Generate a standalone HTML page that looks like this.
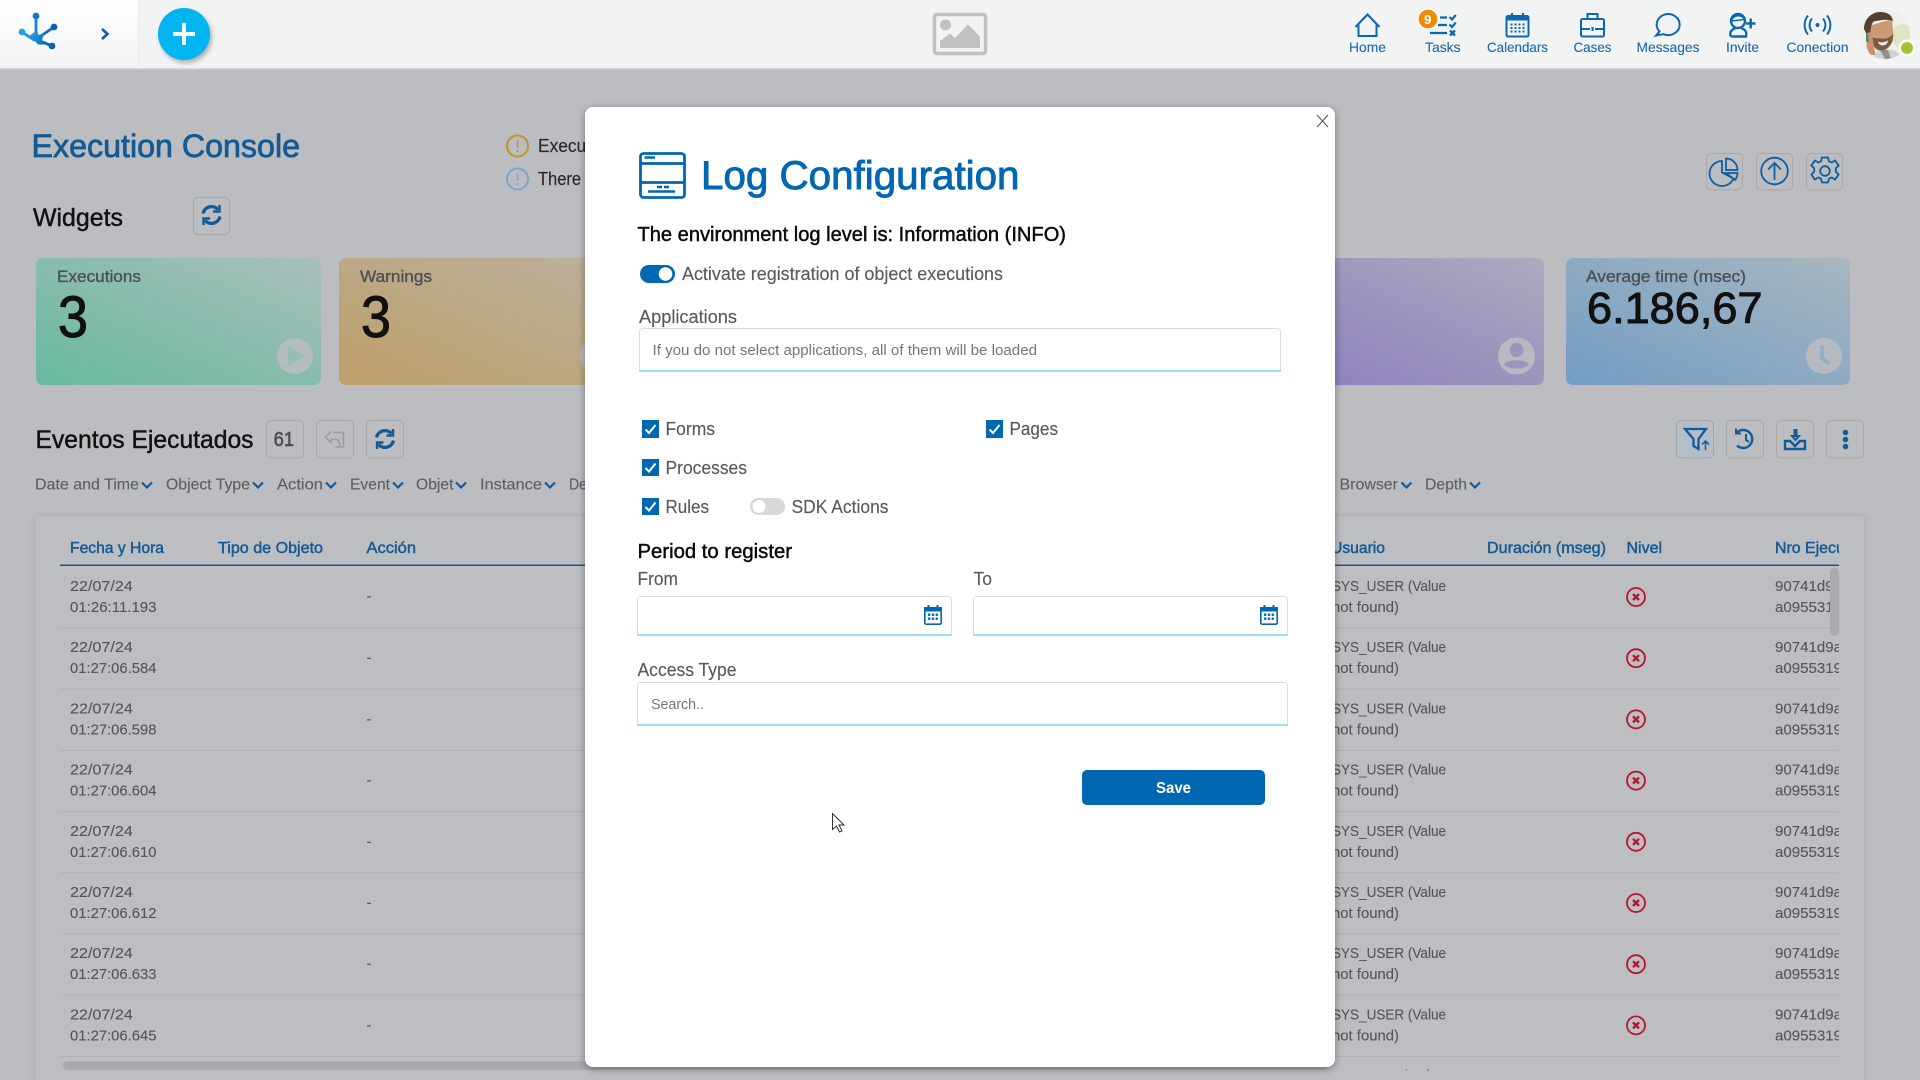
<!DOCTYPE html>
<html lang="en"><head><meta charset="utf-8"><title>Log Configuration</title>
<style>
html,body{margin:0;padding:0;width:1920px;height:1080px;overflow:hidden;background:#bcbdc1}
svg{position:absolute;left:0;top:0;display:block}
text{font-family:"Liberation Sans",Arial,sans-serif;fill:currentColor;white-space:pre}
.m{stroke:currentColor;stroke-width:.4}
.b{fill:none;stroke:#a8a9ad;stroke-width:1}
.lab{font-size:16px;color:#5b5e63;stroke:currentColor;stroke-width:.12}
.chev{fill:none;stroke:#135a96;stroke-width:2.200}
.th{font-size:16px;color:#135a96;stroke:currentColor;stroke-width:.45}
.td{font-size:15px;color:#54565b;stroke:currentColor;stroke-width:.12}
.nav{font-size:14px;color:#1c6ab0;stroke:currentColor;stroke-width:.12}
.ni{fill:none;stroke:#0c67b1;stroke-width:2}
.ti{fill:none;stroke:#0f5f9f;stroke-width:1.800}
.tb{fill:none;stroke:#135a96;stroke-width:2.400}
.l{font-size:18px;color:#5a5a5a;stroke:currentColor;stroke-width:.15}
#modal{position:absolute;left:585px;top:107px;width:750px;height:960px;background:#fff;border-radius:8px;box-shadow:0 2px 8px rgba(0,0,0,.38)}
#modal svg{left:0;top:0}
</style></head><body>
<svg width="1920" height="1080" viewBox="0 0 1920 1080" xmlns="http://www.w3.org/2000/svg">
<defs>
<linearGradient id="c1" x1="0" y1="1" x2="1" y2="0"><stop offset="0" stop-color="#68b9a0"/><stop offset="1" stop-color="#a8bfba"/></linearGradient>
<linearGradient id="c2" x1="0" y1="1" x2="1" y2="0"><stop offset="0" stop-color="#bd9f69"/><stop offset="1" stop-color="#bcb19e"/></linearGradient>
<linearGradient id="c4" x1="0" y1="1" x2="1" y2="0"><stop offset="0" stop-color="#8b7dbd"/><stop offset="1" stop-color="#aeaabf"/></linearGradient>
<linearGradient id="c5" x1="0" y1="1" x2="1" y2="0"><stop offset="0" stop-color="#739ec4"/><stop offset="1" stop-color="#a8b6c0"/></linearGradient>
<linearGradient id="hl" x1="0" y1="0" x2="0" y2="1"><stop offset="0" stop-color="#ffffff"/><stop offset="1" stop-color="#f3f5f5"/></linearGradient>
<linearGradient id="logo" x1="0" y1="0" x2="1" y2="1"><stop offset="0" stop-color="#2fa3e0"/><stop offset="1" stop-color="#0a69b8"/></linearGradient>
<clipPath id="tbl"><rect x="0" y="500" width="1839" height="580"/></clipPath>
<clipPath id="av"><circle cx="1885" cy="34" r="25"/></clipPath>
<symbol id="err" viewBox="0 0 24 24" overflow="visible"><circle cx="12" cy="12" r="9" fill="none" stroke="#b3162e" stroke-width="1.800"/><path d="M9 9l6 6M15 9l-6 6" fill="none" stroke="#b3162e" stroke-width="2.400"/></symbol>
</defs>

<!-- Page head -->
<text x="31.500" y="157" font-size="32" class="m" style="color:#135a96;stroke-width:.75" textLength="268.500" lengthAdjust="spacingAndGlyphs">Execution Console</text>
<circle cx="517.500" cy="146" r="10.500" fill="none" stroke="#c1942b" stroke-width="2"/><path d="M517.500 140v7.500M517.500 150v2" stroke="#c1942b" stroke-width="1.600" fill="none"/>
<circle cx="517.500" cy="179" r="10.500" fill="none" stroke="#7aa6c8" stroke-width="2"/><path d="M517.500 173v7.500M517.500 183v2" stroke="#7aa6c8" stroke-width="1.600" fill="none"/>
<text x="538" y="152" font-size="18" class="m" style="color:#26282c;stroke-width:.15" textLength="53" lengthAdjust="spacingAndGlyphs">Execut</text>
<text x="538" y="185" font-size="18" class="m" style="color:#26282c;stroke-width:.15" textLength="43" lengthAdjust="spacingAndGlyphs">There</text>

<text x="33" y="226" font-size="25" class="m" style="color:#111;stroke-width:.45" textLength="90" lengthAdjust="spacingAndGlyphs">Widgets</text>
<rect x="193.500" y="197.500" width="36" height="37" rx="5" class="b"/>
<g class="tb" transform="translate(211.500,215)" style="stroke-width:3.300"><path d="M-8.500-1.500A8.700 8.700 0 0 1 6.500-5.500"/><path d="M8.500 1.500A8.700 8.700 0 0 1-6.500 5.500"/><path d="M8-10V-3.500H1.500" stroke-width="2.400"/><path d="M-8 10V3.500H-1.500" stroke-width="2.400"/></g>

<!-- Widgets -->
<rect x="36" y="258" width="285" height="127" rx="7" fill="url(#c1)"/>
<rect x="339" y="258" width="285" height="127" rx="7" fill="url(#c2)"/>
<rect x="1263" y="258" width="281" height="127" rx="7" fill="url(#c4)"/>
<rect x="1566" y="258" width="284" height="127" rx="7" fill="url(#c5)"/>
<text x="57" y="282" font-size="17" class="m" style="color:#4c5055;stroke-width:.35" textLength="84" lengthAdjust="spacingAndGlyphs">Executions</text>
<text x="58" y="337" font-size="58" class="m" style="color:#111;stroke-width:1" textLength="30" lengthAdjust="spacingAndGlyphs">3</text>
<circle cx="295" cy="356" r="18" fill="#bcbdc1" opacity=".85"/><path d="M288 346l17 10-17 10z" fill="#8fbdb0" opacity=".8"/>
<text x="360" y="282" font-size="17" class="m" style="color:#4c5055;stroke-width:.35" textLength="72" lengthAdjust="spacingAndGlyphs">Warnings</text>
<text x="361" y="337" font-size="58" class="m" style="color:#111;stroke-width:1" textLength="30" lengthAdjust="spacingAndGlyphs">3</text>
<circle cx="598" cy="356" r="18" fill="#bcbdc1" opacity=".85"/>
<circle cx="1516.500" cy="356" r="18.500" fill="#bcbdc1" opacity=".9"/>
<circle cx="1516.500" cy="350" r="7" fill="#9e95bd"/><path d="M1504 364c3-5 22-5 25 0-3 6-22 6-25 0z" fill="#9e95bd"/>
<text x="1586" y="282" font-size="17" class="m" style="color:#4c5055;stroke-width:.35" textLength="160" lengthAdjust="spacingAndGlyphs">Average time (msec)</text>
<text x="1587" y="323" font-size="44" class="m" style="color:#111;stroke-width:1" textLength="175.500" lengthAdjust="spacingAndGlyphs">6.186,67</text>
<circle cx="1824" cy="356" r="18" fill="#bcbdc1" opacity=".85"/><path d="M1822 345v13l7 6" fill="none" stroke="#93adc3" stroke-width="3.500"/>

<!-- Top right tools -->
<rect x="1706.500" y="153.500" width="36" height="36.500" rx="5" class="b"/>
<rect x="1756.500" y="153.500" width="36" height="36.500" rx="5" class="b"/>
<rect x="1806.500" y="153.500" width="36" height="36.500" rx="5" class="b"/>
<g class="ti"><path d="M1722 161a12.500 12.500 0 1 0 11.500 17.500l-11.500-6z"/><path d="M1726 158.500a11.500 11.500 0 0 1 11.500 11.500h-11.500z"/><path d="M1726 173h11.500a11.500 11.500 0 0 1-2.500 7z"/></g>
<g class="ti"><circle cx="1774.500" cy="171" r="13.300"/><path d="M1774.500 180v-17M1768 169.500l6.500-6.500 6.500 6.500"/></g>
<g class="ti" transform="translate(1825,171)"><circle r="4.800"/><path d="M-3-13.500h6l1 3.800 2.600 1.200 3.500-2 3.500 5-2.800 2.800v3.400l2.800 2.800-3.500 5-3.500-2-2.600 1.200-1 3.800h-6l-1-3.800-2.600-1.200-3.500 2-3.500-5 2.800-2.800v-3.400l-2.800-2.800 3.500-5 3.500 2 2.600-1.200z"/></g>

<!-- Eventos -->
<text x="35.500" y="448" font-size="25" class="m" style="color:#111;stroke-width:.45" textLength="218" lengthAdjust="spacingAndGlyphs">Eventos Ejecutados</text>
<rect x="266.500" y="420.500" width="37" height="37.500" rx="5" class="b"/>
<text x="273.600" y="446" font-size="20" class="m" style="color:#4b4e53;stroke-width:.6" textLength="20.500" lengthAdjust="spacingAndGlyphs">61</text>
<rect x="316.500" y="420.500" width="37" height="37.500" rx="5" class="b"/>
<path d="M331 431.500L325.500 437L331 442.500V439.500H336C339 439.500 340 442 340 447M333.500 432.500H343.500V447H335.500" fill="none" stroke="#9a9b9f" stroke-width="1.500"/>
<rect x="366.500" y="420.500" width="37" height="37.500" rx="5" class="b"/>
<g class="tb" transform="translate(385,439)" style="stroke-width:3.300"><path d="M-8.500-1.500A8.700 8.700 0 0 1 6.500-5.500"/><path d="M8.500 1.500A8.700 8.700 0 0 1-6.500 5.500"/><path d="M8-10V-3.500H1.500" stroke-width="2.400"/><path d="M-8 10V3.500H-1.500" stroke-width="2.400"/></g>

<rect x="1676.500" y="420.500" width="37" height="37.500" rx="5" fill="#b3bec8" stroke="#a2a7ad"/>
<path d="M1685 429H1706L1698.500 439V449L1693.500 446V439Z" fill="none" stroke="#135a96" stroke-width="2.300"/>
<path d="M1705.500 450V441M1702 444.500L1705.500 441L1709 444.500" fill="none" stroke="#135a96" stroke-width="1.500"/>
<rect x="1726.500" y="420.500" width="37" height="37.500" rx="5" class="b"/>
<g class="tb"><path d="M1737 432.500A9 9 0 1 1 1737 445.500"/><path d="M1736 428.500v5h5" stroke-width="2"/><path d="M1746 434v6l3 2" stroke-width="2"/></g>
<rect x="1776.500" y="420.500" width="37" height="37.500" rx="5" class="b"/>
<g class="tb"><path d="M1785 441v8h20v-8h-5l-5 5-5-5z"/><path d="M1792 436h2.500v-6h2v6h2.500l-3.500 4z" stroke-width="2"/></g>
<rect x="1826.500" y="420.500" width="37" height="37.500" rx="5" class="b"/>
<g fill="#135a96"><circle cx="1845.500" cy="432.500" r="2.800"/><circle cx="1845.500" cy="439.500" r="2.800"/><circle cx="1845.500" cy="446.500" r="2.800"/></g>

<!-- Filters -->
<text class="lab" x="35" y="489.500" textLength="104" lengthAdjust="spacingAndGlyphs">Date and Time</text><path class="chev" d="M142 482.500l5 5 5-5"/>
<text class="lab" x="166" y="489.500" textLength="84" lengthAdjust="spacingAndGlyphs">Object Type</text><path class="chev" d="M253 482.500l5 5 5-5"/>
<text class="lab" x="277" y="489.500" textLength="46" lengthAdjust="spacingAndGlyphs">Action</text><path class="chev" d="M326 482.500l5 5 5-5"/>
<text class="lab" x="350" y="489.500" textLength="40" lengthAdjust="spacingAndGlyphs">Event</text><path class="chev" d="M393 482.500l5 5 5-5"/>
<text class="lab" x="416" y="489.500" textLength="37.500" lengthAdjust="spacingAndGlyphs">Objet</text><path class="chev" d="M456 482.500l5 5 5-5"/>
<text class="lab" x="480" y="489.500" textLength="62" lengthAdjust="spacingAndGlyphs">Instance</text><path class="chev" d="M545 482.500l5 5 5-5"/>
<text class="lab" x="569" y="489.500" textLength="18" lengthAdjust="spacingAndGlyphs">De</text>
<text class="lab" x="1339.500" y="489.500" textLength="58.500" lengthAdjust="spacingAndGlyphs">Browser</text><path class="chev" d="M1401.500 482.500l5 5 5-5"/>
<text class="lab" x="1425" y="489.500" textLength="42" lengthAdjust="spacingAndGlyphs">Depth</text><path class="chev" d="M1470 482.500l5 5 5-5"/>

<!-- Table -->
<rect x="35" y="516" width="1829" height="570" fill="#bdbec2" style="filter:drop-shadow(0 0 3px rgba(0,0,0,.1))"/>
<g clip-path="url(#tbl)">
<text class="th" x="70" y="553" textLength="94" lengthAdjust="spacingAndGlyphs">Fecha y Hora</text>
<text class="th" x="218" y="553" textLength="105" lengthAdjust="spacingAndGlyphs">Tipo de Objeto</text>
<text class="th" x="366.500" y="553" textLength="49.500" lengthAdjust="spacingAndGlyphs">Acción</text>
<text class="th" x="1331" y="553" textLength="54" lengthAdjust="spacingAndGlyphs">Usuario</text>
<text class="th" x="1487" y="553" textLength="119" lengthAdjust="spacingAndGlyphs">Duración (mseg)</text>
<text class="th" x="1626.500" y="553" textLength="35.500" lengthAdjust="spacingAndGlyphs">Nivel</text>
<text class="th" x="1775" y="553" textLength="99" lengthAdjust="spacingAndGlyphs">Nro Ejecución</text>
<rect x="60" y="564.500" width="1779" height="1.500" fill="#16558f"/>

<g>
<text class="td" x="70" y="591" textLength="62.800" lengthAdjust="spacingAndGlyphs">22/07/24</text><text class="td" x="70" y="612" textLength="86.500" lengthAdjust="spacingAndGlyphs">01:26:11.193</text>
<text class="td" x="366.500" y="601">-</text><text class="td" x="1332" y="591" textLength="114" lengthAdjust="spacingAndGlyphs">SYS_USER (Value</text><text class="td" x="1332" y="612" textLength="67" lengthAdjust="spacingAndGlyphs">not found)</text>
<use href="#err" x="1624" y="585" width="24" height="24"/>
<text class="td" x="1775" y="591" textLength="67" lengthAdjust="spacingAndGlyphs">90741d9a</text><text class="td" x="1775" y="612" textLength="67" lengthAdjust="spacingAndGlyphs">a0955319</text>
<rect x="60" y="627.500" width="1779" height="1" fill="#b1b2b6"/>
</g>
<g transform="translate(0,61.200)">
<text class="td" x="70" y="591" textLength="62.800" lengthAdjust="spacingAndGlyphs">22/07/24</text><text class="td" x="70" y="612" textLength="86.500" lengthAdjust="spacingAndGlyphs">01:27:06.584</text>
<text class="td" x="366.500" y="601.500">-</text><text class="td" x="1332" y="591" textLength="114" lengthAdjust="spacingAndGlyphs">SYS_USER (Value</text><text class="td" x="1332" y="612" textLength="67" lengthAdjust="spacingAndGlyphs">not found)</text>
<use href="#err" x="1624" y="585" width="24" height="24"/>
<text class="td" x="1775" y="591" textLength="67" lengthAdjust="spacingAndGlyphs">90741d9a</text><text class="td" x="1775" y="612" textLength="67" lengthAdjust="spacingAndGlyphs">a0955319</text>
<rect x="60" y="627.500" width="1779" height="1" fill="#b1b2b6"/>
</g>
<g transform="translate(0,122.400)">
<text class="td" x="70" y="591" textLength="62.800" lengthAdjust="spacingAndGlyphs">22/07/24</text><text class="td" x="70" y="612" textLength="86.500" lengthAdjust="spacingAndGlyphs">01:27:06.598</text>
<text class="td" x="366.500" y="601.500">-</text><text class="td" x="1332" y="591" textLength="114" lengthAdjust="spacingAndGlyphs">SYS_USER (Value</text><text class="td" x="1332" y="612" textLength="67" lengthAdjust="spacingAndGlyphs">not found)</text>
<use href="#err" x="1624" y="585" width="24" height="24"/>
<text class="td" x="1775" y="591" textLength="67" lengthAdjust="spacingAndGlyphs">90741d9a</text><text class="td" x="1775" y="612" textLength="67" lengthAdjust="spacingAndGlyphs">a0955319</text>
<rect x="60" y="627.500" width="1779" height="1" fill="#b1b2b6"/>
</g>
<g transform="translate(0,183.600)">
<text class="td" x="70" y="591" textLength="62.800" lengthAdjust="spacingAndGlyphs">22/07/24</text><text class="td" x="70" y="612" textLength="86.500" lengthAdjust="spacingAndGlyphs">01:27:06.604</text>
<text class="td" x="366.500" y="601.500">-</text><text class="td" x="1332" y="591" textLength="114" lengthAdjust="spacingAndGlyphs">SYS_USER (Value</text><text class="td" x="1332" y="612" textLength="67" lengthAdjust="spacingAndGlyphs">not found)</text>
<use href="#err" x="1624" y="585" width="24" height="24"/>
<text class="td" x="1775" y="591" textLength="67" lengthAdjust="spacingAndGlyphs">90741d9a</text><text class="td" x="1775" y="612" textLength="67" lengthAdjust="spacingAndGlyphs">a0955319</text>
<rect x="60" y="627.500" width="1779" height="1" fill="#b1b2b6"/>
</g>
<g transform="translate(0,244.800)">
<text class="td" x="70" y="591" textLength="62.800" lengthAdjust="spacingAndGlyphs">22/07/24</text><text class="td" x="70" y="612" textLength="86.500" lengthAdjust="spacingAndGlyphs">01:27:06.610</text>
<text class="td" x="366.500" y="601.500">-</text><text class="td" x="1332" y="591" textLength="114" lengthAdjust="spacingAndGlyphs">SYS_USER (Value</text><text class="td" x="1332" y="612" textLength="67" lengthAdjust="spacingAndGlyphs">not found)</text>
<use href="#err" x="1624" y="585" width="24" height="24"/>
<text class="td" x="1775" y="591" textLength="67" lengthAdjust="spacingAndGlyphs">90741d9a</text><text class="td" x="1775" y="612" textLength="67" lengthAdjust="spacingAndGlyphs">a0955319</text>
<rect x="60" y="627.500" width="1779" height="1" fill="#b1b2b6"/>
</g>
<g transform="translate(0,306)">
<text class="td" x="70" y="591" textLength="62.800" lengthAdjust="spacingAndGlyphs">22/07/24</text><text class="td" x="70" y="612" textLength="86.500" lengthAdjust="spacingAndGlyphs">01:27:06.612</text>
<text class="td" x="366.500" y="601.500">-</text><text class="td" x="1332" y="591" textLength="114" lengthAdjust="spacingAndGlyphs">SYS_USER (Value</text><text class="td" x="1332" y="612" textLength="67" lengthAdjust="spacingAndGlyphs">not found)</text>
<use href="#err" x="1624" y="585" width="24" height="24"/>
<text class="td" x="1775" y="591" textLength="67" lengthAdjust="spacingAndGlyphs">90741d9a</text><text class="td" x="1775" y="612" textLength="67" lengthAdjust="spacingAndGlyphs">a0955319</text>
<rect x="60" y="627.500" width="1779" height="1" fill="#b1b2b6"/>
</g>
<g transform="translate(0,367.200)">
<text class="td" x="70" y="591" textLength="62.800" lengthAdjust="spacingAndGlyphs">22/07/24</text><text class="td" x="70" y="612" textLength="86.500" lengthAdjust="spacingAndGlyphs">01:27:06.633</text>
<text class="td" x="366.500" y="601.500">-</text><text class="td" x="1332" y="591" textLength="114" lengthAdjust="spacingAndGlyphs">SYS_USER (Value</text><text class="td" x="1332" y="612" textLength="67" lengthAdjust="spacingAndGlyphs">not found)</text>
<use href="#err" x="1624" y="585" width="24" height="24"/>
<text class="td" x="1775" y="591" textLength="67" lengthAdjust="spacingAndGlyphs">90741d9a</text><text class="td" x="1775" y="612" textLength="67" lengthAdjust="spacingAndGlyphs">a0955319</text>
<rect x="60" y="627.500" width="1779" height="1" fill="#b1b2b6"/>
</g>
<g transform="translate(0,428.400)">
<text class="td" x="70" y="591" textLength="62.800" lengthAdjust="spacingAndGlyphs">22/07/24</text><text class="td" x="70" y="612" textLength="86.500" lengthAdjust="spacingAndGlyphs">01:27:06.645</text>
<text class="td" x="366.500" y="601.500">-</text><text class="td" x="1332" y="591" textLength="114" lengthAdjust="spacingAndGlyphs">SYS_USER (Value</text><text class="td" x="1332" y="612" textLength="67" lengthAdjust="spacingAndGlyphs">not found)</text>
<use href="#err" x="1624" y="585" width="24" height="24"/>
<text class="td" x="1775" y="591" textLength="67" lengthAdjust="spacingAndGlyphs">90741d9a</text><text class="td" x="1775" y="612" textLength="67" lengthAdjust="spacingAndGlyphs">a0955319</text>
<rect x="60" y="627.500" width="1779" height="1" fill="#b1b2b6"/>
</g>
</g>
<rect x="1830" y="568" width="9" height="68" rx="4.500" fill="#aaabaf"/>
<rect x="63" y="1061" width="1265" height="9" rx="4.500" fill="#aaabaf"/>
<g fill="#6f7175"><rect x="1406" y="1069" width="1" height="1.500"/><rect x="1427" y="1069" width="1.500" height="1.500"/></g>

<!-- Header -->
<rect x="0" y="0" width="1920" height="68" fill="#f2f4f4"/>
<rect x="0" y="68" width="1920" height="1.500" fill="#d3d5d8"/>
<rect x="0" y="0" width="138" height="68" fill="url(#hl)"/>
<rect x="138" y="0" width="1" height="68" fill="#e9ebeb"/>
<g fill="none" stroke-linecap="round"><path d="M36 16V36" stroke="#1a86cf" stroke-width="2.800"/><path d="M54 27L38 38" stroke="#0e6fbd" stroke-width="2.800"/><path d="M22 32L34 40" stroke="#1c93d8" stroke-width="2.800"/><path d="M52 46L38 40" stroke="#0a62ad" stroke-width="2.800"/></g>
<g><circle cx="36" cy="16" r="3.400" fill="#0f78c4"/><circle cx="54" cy="27" r="3.400" fill="#0a62ad"/><circle cx="22" cy="32" r="3.400" fill="#28a0e0"/><circle cx="52" cy="46" r="3.400" fill="#0a62ad"/></g>
<path d="M30 35.500L35 31.500H37.500L38.500 35L44 33L42 40.500L46 44.500H38Z" fill="url(#logo)"/>
<path d="M102 29L107.500 34L102 39" fill="none" stroke="#1c5cab" stroke-width="2.700"/>
<circle cx="184" cy="34" r="26" fill="#00b5f0" style="filter:drop-shadow(2px 3px 2px rgba(0,0,0,.28))"/>
<path d="M173 34H195M184 23V45" stroke="#fff" stroke-width="4" fill="none"/>

<!-- image placeholder -->
<rect x="934.500" y="14.500" width="51" height="39" rx="2" fill="none" stroke="#bfc1c3" stroke-width="3.500"/>
<circle cx="945.500" cy="25" r="5.500" fill="#bfc1c3"/>
<path d="M940 48V41L950 33.500L955 38L968 24.500L980 36.500V48Z" fill="#bfc1c3"/>

<!-- Nav -->
<path class="ni" d="M1355.500 27L1367.500 14.500L1379.500 27M1358.500 24.500V36H1376.500V24.500"/>
<text class="nav" x="1349" y="52" textLength="37" lengthAdjust="spacingAndGlyphs">Home</text>

<g class="ni" style="stroke-width:2.200"><path d="M1440 17.500h7M1438 25h9M1430 33h17"/><path d="M1449.500 17l2.500 2.500 3.800-4.500"/><path d="M1449.500 24.500l2.500 2.500 3.800-4.500"/><path d="M1450 30.500l5 5M1455 30.500l-5 5" style="stroke-width:2.400"/></g>
<circle cx="1428" cy="19" r="11" fill="#f7f8f8"/><circle cx="1428" cy="19" r="9.300" fill="#f08c00"/>
<text x="1424" y="24" font-size="13" font-weight="bold" style="color:#fff" textLength="7.500" lengthAdjust="spacingAndGlyphs">9</text>
<text class="nav" x="1425" y="52" textLength="35.600" lengthAdjust="spacingAndGlyphs">Tasks</text>

<rect class="ni" x="1506.500" y="16" width="22" height="20.500" rx="1.500"/>
<path d="M1506 17h23v3.500h-23zM1511 13h2v4h-2zM1522 13h2v4h-2z" fill="#0c67b1"/>
<g fill="#0c67b1"><rect x="1510.500" y="23.500" width="2" height="2"/><rect x="1514.500" y="23.500" width="2" height="2"/><rect x="1518.500" y="23.500" width="2" height="2"/><rect x="1522.500" y="23.500" width="2" height="2"/><rect x="1510.500" y="27" width="2" height="2"/><rect x="1514.500" y="27" width="2" height="2"/><rect x="1518.500" y="27" width="2" height="2"/><rect x="1522.500" y="27" width="2" height="2"/><rect x="1510.500" y="30.500" width="2" height="2"/><rect x="1514.500" y="30.500" width="2" height="2"/><rect x="1518.500" y="30.500" width="2" height="2"/><rect x="1522.500" y="30.500" width="2" height="2"/></g>
<text class="nav" x="1487" y="52" textLength="61" lengthAdjust="spacingAndGlyphs">Calendars</text>

<rect class="ni" x="1581" y="19" width="23" height="17.500" rx="1.500"/>
<path class="ni" d="M1587.500 18.500V14H1597.500V18.500M1581 29H1590M1595 29H1604"/>
<rect x="1591.500" y="27" width="2" height="4" fill="#0c67b1"/>
<text class="nav" x="1573.500" y="52" textLength="38" lengthAdjust="spacingAndGlyphs">Cases</text>

<path class="ni" d="M1659.500 31.500A11.500 10.500 0 1 1 1663.500 34.200L1656 35.500Z"/>
<text class="nav" x="1636.500" y="52" textLength="63" lengthAdjust="spacingAndGlyphs">Messages</text>

<circle cx="1738" cy="21" r="7" fill="none" stroke="#0c67b1" stroke-width="2.400"/>
<path d="M1731.500 21a7 7 0 0 1 13-1.500z" fill="none" stroke="#0c67b1" stroke-width="1.500"/>
<path d="M1731 36.500c-2-4 .5-7 4.500-8.500M1741 28c4.500 1.500 6 4 5 8.500H1731" class="ni" style="stroke-width:2.400"/>
<path d="M1746 23.500h9.500M1750.700 18.500v10" class="ni" style="stroke-width:2.400"/>
<text class="nav" x="1726" y="52" textLength="33" lengthAdjust="spacingAndGlyphs">Invite</text>

<circle cx="1817.500" cy="25" r="2" fill="#0c67b1"/>
<path class="ni" d="M1812 18.500a10 10 0 0 0 0 13M1823 18.500a10 10 0 0 1 0 13M1808 15.500a15 15 0 0 0 0 19M1827 15.500a15 15 0 0 1 0 19"/>
<text class="nav" x="1786.500" y="52" textLength="62" lengthAdjust="spacingAndGlyphs">Conection</text>

<!-- Avatar -->
<g clip-path="url(#av)">
<rect x="1860" y="9" width="50" height="50" fill="#eef1ea"/>
<ellipse cx="1902" cy="36" rx="11" ry="12" fill="#dfe5c4"/>
<path d="M1873 59c2-7 6-10 10-10l9 1c5 1 8 4 9 9z" fill="#cfd4d2"/>
<path d="M1880 50l5 9h6l-3-9z" fill="#8e8f88"/>
<path d="M1869 26L1892 19L1893.500 35C1893 44 1888 50.500 1881 50.500C1875 50.500 1871 45 1869 38Z" fill="#cd9a78"/>
<path d="M1864 29C1864 18 1873 11.500 1881 12C1888 12.500 1892 15 1893 21C1887 18.500 1880 20.500 1873.500 21.500C1871.500 24 1870.500 28 1870.500 32L1866.500 34Z" fill="#54402f"/>
<path d="M1871 36C1874 39 1877 38 1881 38.500C1886 39.500 1890 37.500 1893 34L1892.500 41C1890 47 1886 50.500 1881 50.500C1875.500 50.500 1872.500 45 1871 36Z" fill="#7b5a44"/>
<path d="M1878 41.500C1881 43 1885 42.500 1888 40.500C1888 43.500 1885 45.500 1882.500 45.500C1880 45.500 1878.500 43.500 1878 41.500Z" fill="#f4efe9"/>
<path d="M1867 33L1871.500 32.500L1874 46L1875.500 55L1870 55L1866.500 47Z" fill="#c99270"/>
<rect x="1866" y="34" width="2.500" height="8" fill="#4c8a80"/>
</g>
<circle cx="1907" cy="48" r="8.500" fill="#fff"/><circle cx="1907" cy="48" r="6" fill="#a0c52e"/>
</svg>

<!-- Modal -->
<div id="modal">
<svg width="750" height="960" viewBox="585 107 750 960" xmlns="http://www.w3.org/2000/svg">
<path d="M1317 115L1328 127M1328 115L1317 127" stroke="#55585c" stroke-width="1.100" fill="none"/>

<g fill="none" stroke="#0067b2" stroke-width="2.800"><rect x="640.500" y="153.500" width="44" height="44" rx="3"/><path d="M640 163.500H685M640 182.500H685"/></g>
<path d="M644.500 157.500H655M657 187H662M664 187H669M648 191.500H675" stroke="#0067b2" stroke-width="2.400" fill="none"/>
<text x="701" y="189" font-size="40" class="m" style="color:#0067b2;stroke-width:.9" textLength="318.500" lengthAdjust="spacingAndGlyphs">Log Configuration</text>

<text x="637.500" y="241" font-size="20" class="m" style="color:#0a0a0a;stroke-width:.45" textLength="428.500" lengthAdjust="spacingAndGlyphs">The environment log level is: Information (INFO)</text>

<rect x="640" y="265" width="35" height="18" rx="9" fill="#0067b2"/><circle cx="665.500" cy="274" r="6.800" fill="#fff"/>
<text class="l" x="682" y="280" textLength="321" lengthAdjust="spacingAndGlyphs">Activate registration of object executions</text>

<text class="l" x="639" y="323" textLength="98" lengthAdjust="spacingAndGlyphs">Applications</text>
<rect x="639.500" y="328.500" width="641" height="43" rx="3" fill="#fff" stroke="#dddddd"/>
<rect x="639" y="370" width="642" height="2" fill="#9adff5"/>
<text x="652.500" y="355" font-size="15" style="color:#757575" textLength="384.500" lengthAdjust="spacingAndGlyphs">If you do not select applications, all of them will be loaded</text>

<g><rect x="642" y="420" width="17" height="18" fill="#0067b2"/><path d="M645.500 429.500L649 433L655.500 425" stroke="#fff" stroke-width="2" fill="none"/></g>
<text class="l" x="665.500" y="435" textLength="49.500" lengthAdjust="spacingAndGlyphs">Forms</text>
<g><rect x="986" y="420" width="17" height="18" fill="#0067b2"/><path d="M989.500 429.500L993 433L999.500 425" stroke="#fff" stroke-width="2" fill="none"/></g>
<text class="l" x="1009.500" y="435" textLength="48.500" lengthAdjust="spacingAndGlyphs">Pages</text>
<g><rect x="642" y="459" width="17" height="17" fill="#0067b2"/><path d="M645.500 468L649 471.500L655.500 463.500" stroke="#fff" stroke-width="2" fill="none"/></g>
<text class="l" x="665.500" y="474" textLength="81.500" lengthAdjust="spacingAndGlyphs">Processes</text>
<g><rect x="642" y="498" width="17" height="17" fill="#0067b2"/><path d="M645.500 507L649 510.500L655.500 502.500" stroke="#fff" stroke-width="2" fill="none"/></g>
<text class="l" x="665.500" y="513" textLength="43.500" lengthAdjust="spacingAndGlyphs">Rules</text>
<rect x="750" y="498" width="35" height="17" rx="8.500" fill="#d6d8da"/><circle cx="759" cy="506.500" r="6.500" fill="#fff"/>
<text class="l" x="791.500" y="513" textLength="97" lengthAdjust="spacingAndGlyphs">SDK Actions</text>

<text x="637.500" y="558" font-size="20" class="m" style="color:#0a0a0a;stroke-width:.45" textLength="154.500" lengthAdjust="spacingAndGlyphs">Period to register</text>
<text class="l" x="637.500" y="585" textLength="40.500" lengthAdjust="spacingAndGlyphs">From</text>
<text class="l" x="973.500" y="585" textLength="18.500" lengthAdjust="spacingAndGlyphs">To</text>

<rect x="637.500" y="596.500" width="314" height="39" rx="3" fill="#fff" stroke="#dddddd"/><rect x="637" y="634" width="315" height="2" fill="#9adff5"/>
<rect x="973.500" y="596.500" width="314" height="39" rx="3" fill="#fff" stroke="#dddddd"/><rect x="973" y="634" width="315" height="2" fill="#9adff5"/>
<g><rect x="924.800" y="607.800" width="16.400" height="16.400" rx="1.500" fill="none" stroke="#0067b2" stroke-width="1.600"/><path d="M924 607h18v4.500h-18zM927.500 605h2v3h-2zM936.500 605h2v3h-2z" fill="#0067b2"/><g fill="#0067b2"><rect x="928" y="613.500" width="2.400" height="2.400"/><rect x="931.800" y="613.500" width="2.400" height="2.400"/><rect x="935.600" y="613.500" width="2.400" height="2.400"/><rect x="928" y="617.500" width="2.400" height="2.400"/><rect x="931.800" y="617.500" width="2.400" height="2.400"/><rect x="935.600" y="617.500" width="2.400" height="2.400"/></g></g>
<g transform="translate(336,0)"><rect x="924.800" y="607.800" width="16.400" height="16.400" rx="1.500" fill="none" stroke="#0067b2" stroke-width="1.600"/><path d="M924 607h18v4.500h-18zM927.500 605h2v3h-2zM936.500 605h2v3h-2z" fill="#0067b2"/><g fill="#0067b2"><rect x="928" y="613.500" width="2.400" height="2.400"/><rect x="931.800" y="613.500" width="2.400" height="2.400"/><rect x="935.600" y="613.500" width="2.400" height="2.400"/><rect x="928" y="617.500" width="2.400" height="2.400"/><rect x="931.800" y="617.500" width="2.400" height="2.400"/><rect x="935.600" y="617.500" width="2.400" height="2.400"/></g></g>

<text class="l" x="637.500" y="676" textLength="99" lengthAdjust="spacingAndGlyphs">Access Type</text>
<rect x="637.500" y="682.500" width="650" height="43" rx="3" fill="#fff" stroke="#dddddd"/><rect x="637" y="724" width="651" height="2" fill="#9adff5"/>
<text x="651" y="709" font-size="15" style="color:#757575" textLength="53" lengthAdjust="spacingAndGlyphs">Search..</text>

<rect x="1082" y="770" width="183" height="35" rx="5" fill="#0067b2"/>
<text x="1156" y="793" font-size="16" font-weight="bold" style="color:#fff" textLength="35" lengthAdjust="spacingAndGlyphs">Save</text>

<path d="M832.500 813.500V829.500L836.500 826L839.500 832L842 831L839 825H844Z" fill="#fff" stroke="#222" stroke-width=".9"/>
</svg>
</div>
</body></html>
